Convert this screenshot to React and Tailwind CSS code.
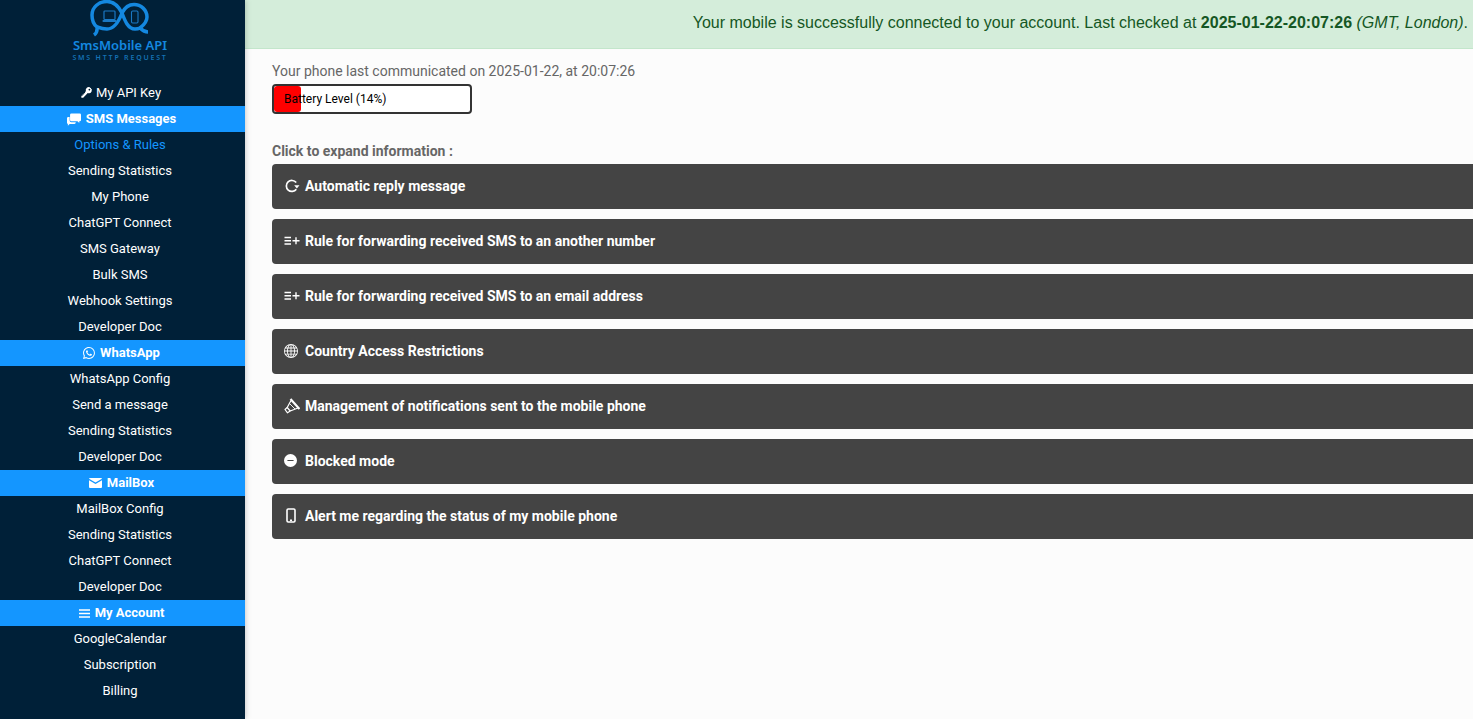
import { BsWhatsapp, BsKeyFill, BsGlobe, BsDashCircleFill } from "react-icons/bs";

const Logo = () => (
  <svg viewBox="0 0 60 38" className="w-[60px] h-[38px] shrink-0" fill="none">
    {/* bubbles */}
    <path
      d="M4 35 C7 33 7.5 31 7 27 C3 24 2 19 2 15 C2 7 9 1.5 17 1.5 C25 1.5 29 7 32 13 C35 21 38 29 45 29 C47 29 49 28.5 50 28 C52 30 54 32 58 32"
      stroke="#1488e0"
      strokeWidth="3.5"
    />
    <path
      d="M50 28 C54 25 57 22 57 17 C57 10 51 4.5 44 4.5 C38 4.5 34 9 32 13 C29 21 25 29 17 29 C13 29 10 28 7 27"
      stroke="#1488e0"
      strokeWidth="3.5"
    />
    {/* laptop */}
    <rect x="14" y="11" width="11" height="8.5" rx="0.8" stroke="#1a78c4" strokeWidth="1.2" />
    <rect x="12.5" y="20" width="14" height="2" rx="0.8" fill="#1a78c4" />
    {/* phone */}
    <rect x="41.5" y="11" width="6.5" height="12" rx="1.2" stroke="#1a78c4" strokeWidth="1.1" />
  </svg>
);

const PlaylistPlus = () => (
  <svg viewBox="0 0 16 16" className="w-[16px] h-[16px]" fill="none" stroke="currentColor" strokeWidth="1.4">
    <path d="M0.5 4.5h6.5M0.5 7.8h6.5M0.5 11h6.5M8.5 7.8h7M12 4.3v7" />
  </svg>
);

const ChatsIcon = () => (
  <svg viewBox="0 0 16 14" className="w-[14px] h-[13px]" fill="currentColor">
    <path d="M5 0h9.5A1.5 1.5 0 0 1 16 1.5v6A1.5 1.5 0 0 1 14.5 9H14v2l-2-2H5a1.5 1.5 0 0 1-1.5-1.5v-6A1.5 1.5 0 0 1 5 0z" />
    <path d="M1.5 4H3v4a2 2 0 0 0 2 2h5v.5A1.5 1.5 0 0 1 8.5 12H3l-2 2v-2A1.5 1.5 0 0 1 0 10.5v-5A1.5 1.5 0 0 1 1.5 4z" />
  </svg>
);

const MailIcon = () => (
  <svg viewBox="0 0 13 10" className="w-[13px] h-[10px]" fill="currentColor">
    <path d="M1 0h11a1 1 0 0 1 1 .8L6.5 4.6 0 .8A1 1 0 0 1 1 0z" />
    <path d="M0 2.2l6.5 3.8L13 2.2V9a1 1 0 0 1-1 1H1a1 1 0 0 1-1-1z" />
  </svg>
);

const MenuIcon = () => (
  <svg viewBox="0 0 11 9" className="w-[11px] h-[9px]" fill="none" stroke="currentColor" strokeWidth="1.3">
    <path d="M0 1h11M0 4.5h11M0 8h11" />
  </svg>
);

const RefreshIcon = () => (
  <svg viewBox="0 0 16 16" className="w-[16px] h-[16px]" fill="none" stroke="currentColor" strokeWidth="1.7">
    <path d="M12.3 11.2A5.5 5.5 0 1 1 12.2 4.6" />
    <path d="M10.2 7.2h5.3l-2.65 3.3z" fill="currentColor" stroke="none" />
  </svg>
);

const HornIcon = () => (
  <svg viewBox="0 0 16 16" className="w-[16px] h-[16px]" fill="none" stroke="currentColor" strokeWidth="1.2" strokeLinejoin="round">
    <path d="M6.5 1L15.5 11" strokeWidth="2.2" />
    <path d="M7 2.5L3.2 9.5L6.2 13L14 10" />
    <path d="M5.5 5.5L11 11" strokeWidth="0.9" />
    <path d="M3.2 9.5L1 11.5L3.5 14.8L6.2 13" />
  </svg>
);

const PhoneIcon = () => (
  <svg viewBox="0 0 10 15" className="w-[10px] h-[15px]" fill="none" stroke="currentColor" strokeWidth="1.6">
    <rect x="1" y="1" width="8" height="13" rx="1.2" />
    <path d="M4 12.2h2" />
  </svg>
);

const Link = ({ label, active }) => (
  <a className={`h-[26px] flex items-center justify-center text-[13px] ${active ? "text-[#1496ff]" : "text-white"}`}>
    {label}
  </a>
);

const Section = ({ icon, label }) => (
  <div className="h-[26px] pr-[2px] flex items-center justify-center gap-[5px] bg-[#1496ff] text-white text-[13px] font-bold">
    {icon}
    {label}
  </div>
);

const Panel = ({ icon, label }) => (
  <div className="h-[45px] pb-[2px] rounded-[4px] bg-[#444444] text-white text-sm font-bold flex items-center pl-3">
    <span className="w-[21px] shrink-0 flex items-center">{icon}</span>
    {label}
  </div>
);

export default function App() {
  return (
    <div className="flex h-[719px] overflow-hidden bg-[#fcfcfc] font-['Roboto',sans-serif]">
      {/* menu */}
      <aside className="w-[245px] shrink-0 bg-[#002038] shadow-[0_0_6px_rgba(0,0,0,0.25)] z-10">
        <div className="w-[240px] h-[80px] flex flex-col items-center">
          <Logo />
          <div className="text-[#1488e0] text-[13px] leading-[15px] font-semibold font-['Noto_Sans',sans-serif]">
            SmsMobile API
          </div>
          <div className="text-[#1572b5] text-[7px] leading-[10px] font-semibold tracking-[1.8px] font-['Noto_Sans',sans-serif]">
            SMS HTTP REQUEST
          </div>
        </div>
        <div className="w-[240px]">
          <a className="h-[26px] flex items-center justify-center gap-[3px] text-white text-[13px]">
            <BsKeyFill className="w-[14px] h-[14px] rotate-[135deg]" /> My API Key
          </a>
        </div>
        <Section icon={<ChatsIcon />} label="SMS Messages" />
        <div className="w-[240px]">
          <Link label="Options & Rules" active />
          <Link label="Sending Statistics" />
          <Link label="My Phone" />
          <Link label="ChatGPT Connect" />
          <Link label="SMS Gateway" />
          <Link label="Bulk SMS" />
          <Link label="Webhook Settings" />
          <Link label="Developer Doc" />
        </div>
        <Section icon={<BsWhatsapp className="w-[12px] h-[12px]" />} label="WhatsApp" />
        <div className="w-[240px]">
          <Link label="WhatsApp Config" />
          <Link label="Send a message" />
          <Link label="Sending Statistics" />
          <Link label="Developer Doc" />
        </div>
        <Section icon={<MailIcon />} label="MailBox" />
        <div className="w-[240px]">
          <Link label="MailBox Config" />
          <Link label="Sending Statistics" />
          <Link label="ChatGPT Connect" />
          <Link label="Developer Doc" />
        </div>
        <Section icon={<MenuIcon />} label="My Account" />
        <div className="w-[240px]">
          <Link label="GoogleCalendar" />
          <Link label="Subscription" />
          <Link label="Billing" />
        </div>
      </aside>

      {/* content */}
      <main className="flex-1 min-w-0 overflow-hidden">
        <div className="h-[49px] pb-[2px] bg-[#d4edda] border-b border-[#c3e6cb] flex items-center justify-end pr-[5px] text-[#155724] text-base whitespace-nowrap font-['Liberation_Sans',sans-serif]">
          <span>
            Your mobile is successfully connected to your account. Last checked at <b>2025-01-22-20:07:26</b>{" "}
            <i>(GMT, London)</i>.
          </span>
        </div>

        <div className="pl-[27px]">
          <p className="mt-[14px] text-sm leading-4 text-[#666666]">Your phone last communicated on 2025-01-22, at 20:07:26</p>
          <div className="mt-[5px] w-[200px] h-[30px] border-2 border-[#333333] rounded-[4px] bg-white relative overflow-hidden">
            <div className="h-full w-[14%] bg-[#ff0000] rounded-[3px]"></div>
            <span className="absolute left-[10px] top-[5px] text-xs leading-4 text-black">Battery Level (14%)</span>
          </div>

          <p className="mt-[29px] text-sm leading-4 font-bold text-[#666666]">Click to expand information :</p>
          <div className="mt-[5px] mr-[-20px] flex flex-col gap-[10px]">
            <Panel icon={<RefreshIcon />} label="Automatic reply message" />
            <Panel icon={<PlaylistPlus />} label="Rule for forwarding received SMS to an another number" />
            <Panel icon={<PlaylistPlus />} label="Rule for forwarding received SMS to an email address" />
            <Panel icon={<BsGlobe className="w-[14px] h-[14px]" />} label="Country Access Restrictions" />
            <Panel icon={<HornIcon />} label="Management of notifications sent to the mobile phone" />
            <Panel icon={<BsDashCircleFill className="w-[13px] h-[13px]" />} label="Blocked mode" />
            <Panel icon={<span className="pl-[2px] flex"><PhoneIcon /></span>} label="Alert me regarding the status of my mobile phone" />
          </div>
        </div>
      </main>
    </div>
  );
}
